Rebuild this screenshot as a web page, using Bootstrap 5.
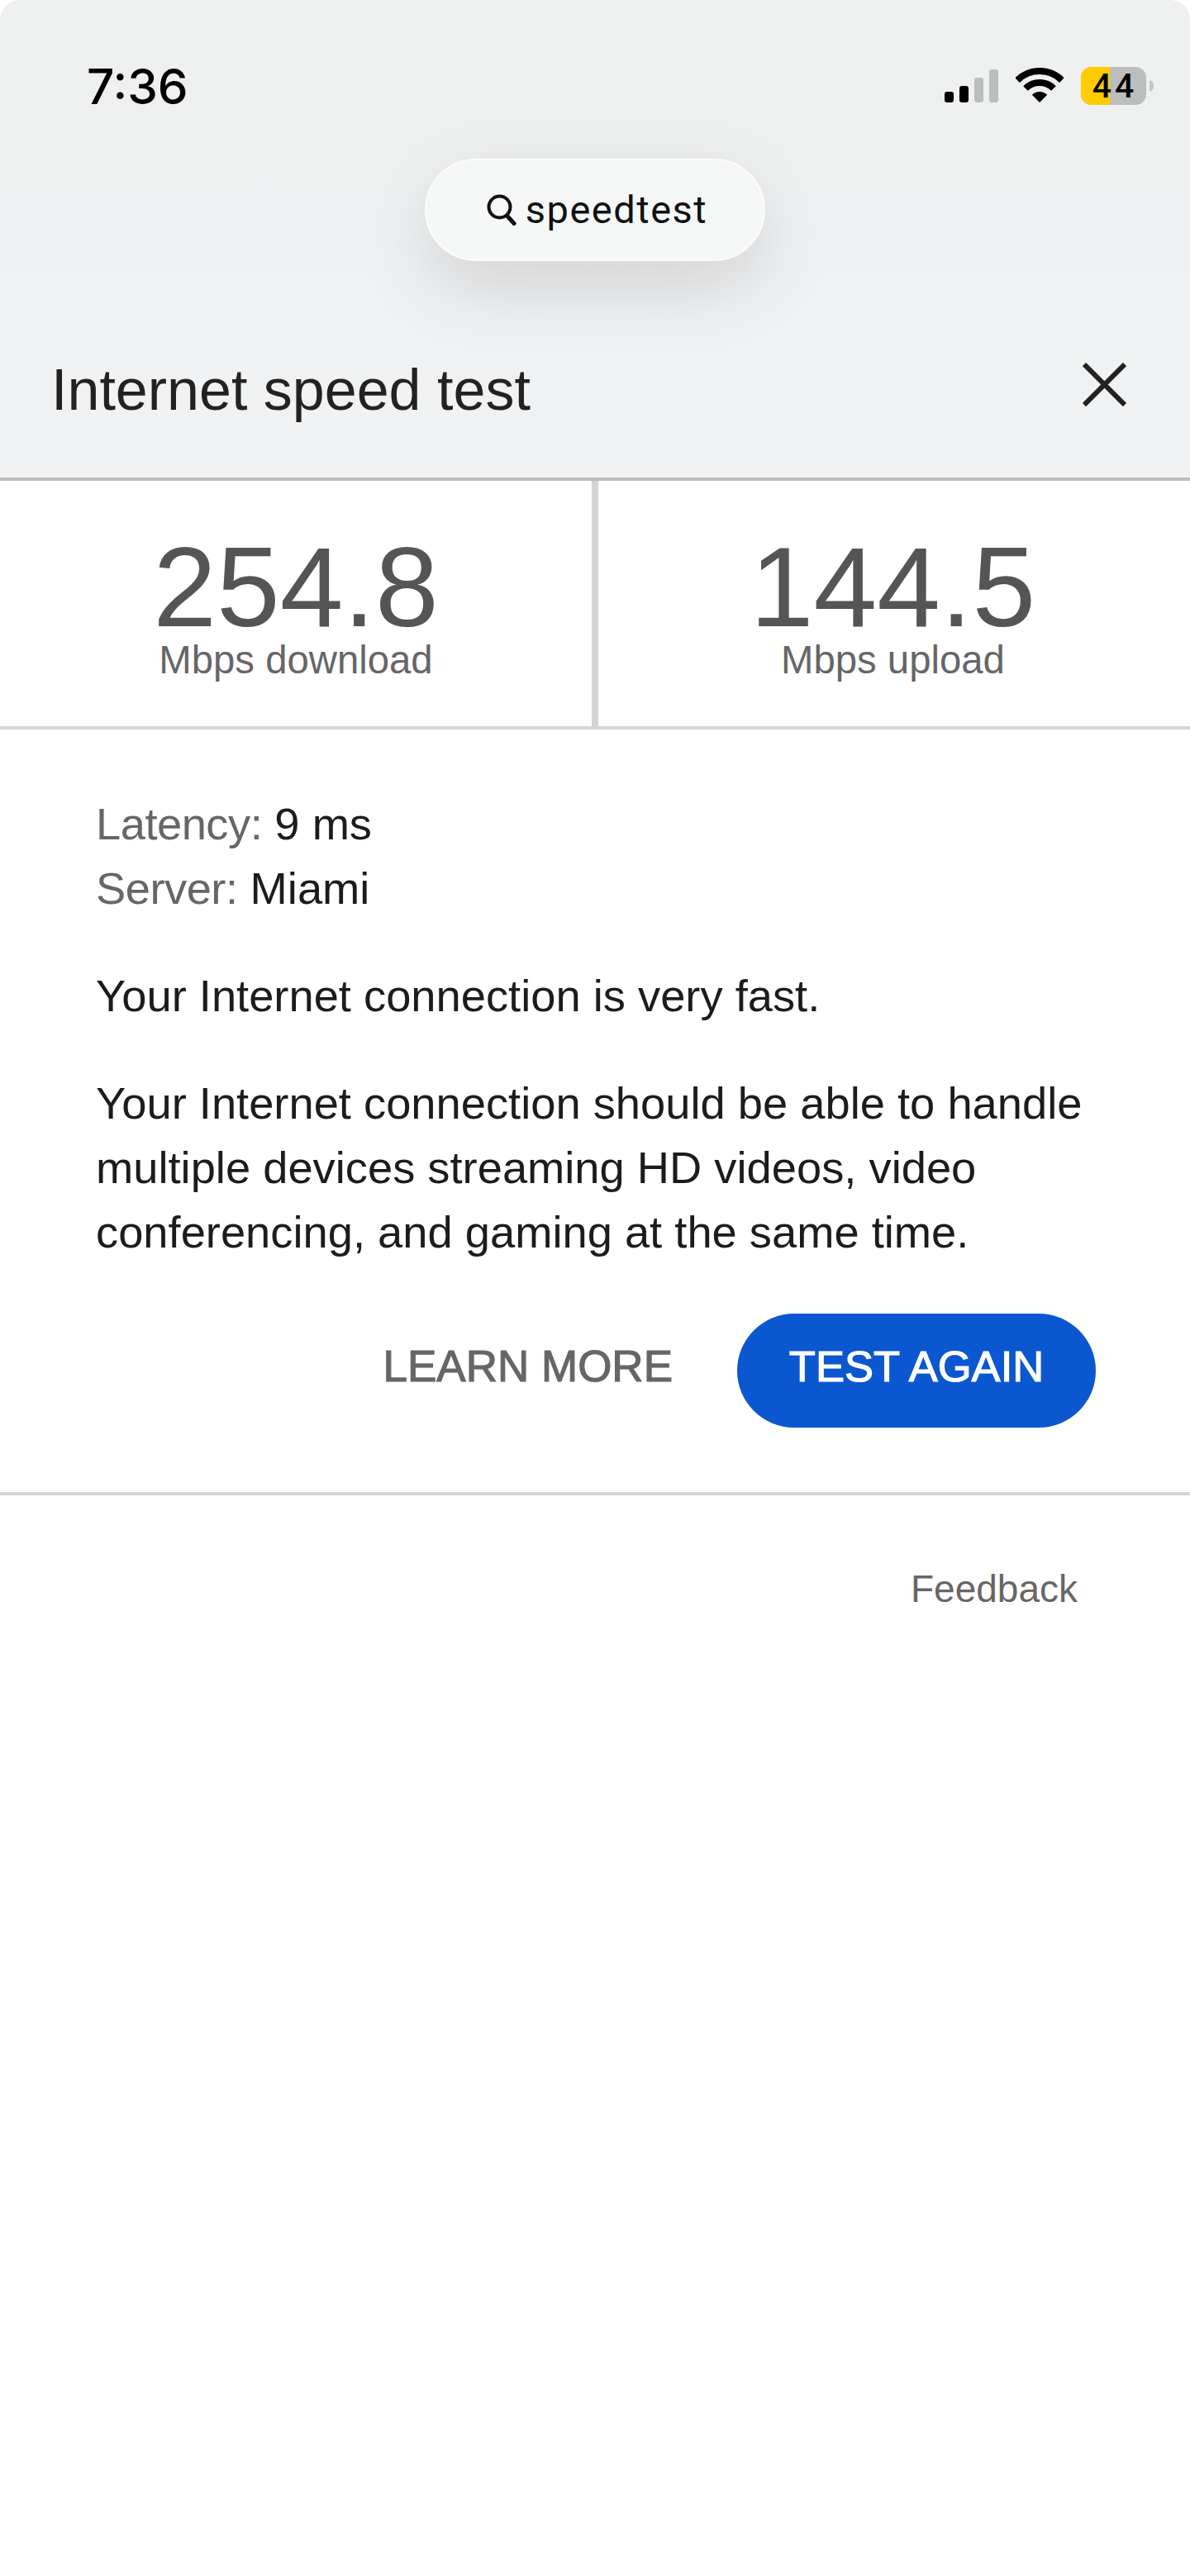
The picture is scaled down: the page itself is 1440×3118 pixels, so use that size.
<!DOCTYPE html>
<html lang="en">

<head>
    <meta charset="UTF-8" />
    <meta name="viewport" content="width=device-width, initial-scale=1.0" />
    <title>Internet speed test</title>
    <link href="https://cdn.jsdelivr.net/npm/bootstrap@5.3.0/dist/css/bootstrap.min.css" rel="stylesheet" />
    <style>
        body {
            background: #fff;
            font-family: "Liberation Sans", Arial, sans-serif;
            color: #1c1c1c;
        }

        .top-area {
            height: 578px;
            background: linear-gradient(#eeefef, #f1f2f4);
            border-radius: 24px 24px 0 0;
        }

        .status-row {
            height: 192px;
            padding: 78px 44px 0 105px;
        }

        .clock {
            font-family: Inter, sans-serif;
            font-weight: 500;
            font-size: 58.5px;
            line-height: 54px;
            color: #000;
        }

        .status-icons {
            height: 46px;
            margin-top: 3px;
        }

        .signal {
            width: 65px;
            height: 40px;
            margin-top: 3px;
            margin-right: 21px;
        }

        .wifi {
            width: 58px;
            height: 42px;
            margin-top: 1px;
            margin-right: 21px;
        }

        .battery {
            width: 88px;
            height: 46px;
        }

        .battery text {
            font-family: Roboto, sans-serif;
            font-weight: 500;
            font-size: 41px;
            letter-spacing: 4px;
        }

        .search-pill {
            width: 412px;
            height: 124px;
            margin: 0 auto;
            padding-left: 5px;
            gap: 11px;
            background: #f6f8f7;
            border: 2px solid #fbfcfb;
            border-radius: 62px;
            box-shadow: 0 30px 90px rgba(0, 0, 0, .13);
            font-family: Roboto, sans-serif;
            font-size: 47px;
            letter-spacing: 1.5px;
            color: #111;
        }

        .search-pill svg {
            width: 36px;
            height: 38px;
        }

        .title-row {
            padding: 116px 77px 0 62px;
        }

        .page-title {
            font-size: 70px;
            line-height: 80px;
            font-weight: 400;
            color: #222;
            margin: 0;
        }

        .close-x {
            width: 53px;
            height: 53px;
            margin-top: 7px;
        }

        .stats {
            height: 305px;
            border-top: 4px solid #bdbdbd;
            border-bottom: 4px solid #d6d6d6;
        }

        .stat-cell {
            padding-top: 73px;
        }

        .stat-cell:first-child {
            border-right: 4px solid #d4d4d4;
        }

        .stat-cell:last-child {
            border-left: 4px solid #d4d4d4;
            padding-right: 3px;
        }

        .stat-num {
            font-size: 138px;
            line-height: 110px;
            color: #555;
        }

        .stat-label {
            font-size: 47.3px;
            line-height: 56px;
            color: #666;
            margin-top: 6px;
        }

        .result-body {
            padding: 76px 116px 0;
            font-size: 54.3px;
            line-height: 78px;
        }

        .result-body p {
            margin: 0;
        }

        .result-body p.para-gap {
            margin-top: 52px;
        }

        .dim {
            color: #666;
            letter-spacing: -.5px;
        }

        .btn-learn,
        .btn-again {
            line-height: 60px;
            -webkit-text-stroke: 1.2px currentColor;
            padding: 0 0 10px;
            border: 0;
        }

        .btn-learn {
            font-size: 53px;
            color: #666;
            background: none;
            margin-right: 78px;
        }

        .btn-again {
            font-size: 52.5px;
            width: 434px;
            height: 138px;
            color: #fff;
            background: #0b57d0;
            border-radius: 69px;
        }

        .actions {
            padding-right: 114px;
            padding-top: 59px;
            padding-bottom: 78px;
            border-bottom: 4px solid #d4d4d4;
        }

        .feedback {
            font-size: 46px;
            line-height: 54px;
            color: #666;
            padding: 86px 136px 0 0;
        }
    </style>
</head>

<body>
    <div class="top-area">
        <div class="status-row d-flex justify-content-between align-items-start">
            <div class="clock">7:36</div>
            <div class="status-icons d-flex align-items-start">
                <svg class="signal" viewBox="0 0 65 40">
                    <rect x="0" y="27" width="11" height="13" rx="3" fill="#000" />
                    <rect x="18" y="20" width="11" height="20" rx="3" fill="#000" />
                    <rect x="36" y="10" width="11" height="30" rx="3" fill="#bcbebd" />
                    <rect x="54" y="0" width="11" height="40" rx="3" fill="#bcbebd" />
                </svg>
                <svg class="wifi" viewBox="0 0 58 42">
                    <path d="M2.1 15.1a38 38 0 0 1 53.8 0M12 25a24 24 0 0 1 34 0" fill="none" stroke="#000" stroke-width="8" />
                    <path d="M29 42 19.8 32.8a13 13 0 0 1 18.4 0z" fill="#000" />
                </svg>
                <svg class="battery" viewBox="0 0 88 46">
                    <rect x="0" y="0" width="79" height="46" rx="13" fill="#bcbebd" />
                    <path d="M13 0h22v46H13a13 13 0 0 1-13-13V13A13 13 0 0 1 13 0z" fill="#ffcc00" />
                    <path d="M83 16c3 1 5 3 5 7s-2 6-5 7z" fill="#c4c6c5" />
                    <text x="41" y="37" text-anchor="middle" fill="#000">44</text>
                </svg>
            </div>
        </div>

        <div class="search-pill d-flex align-items-center justify-content-center">
            <svg viewBox="0 0 36 38">
                <circle cx="15.5" cy="15.5" r="13" fill="none" stroke="#111" stroke-width="4" />
                <path d="M24.5 26 33 35.5" fill="none" stroke="#111" stroke-width="5" stroke-linecap="round" />
            </svg>
            <span>speedtest</span>
        </div>

        <div class="title-row d-flex justify-content-between align-items-start">
            <h1 class="page-title">Internet speed test</h1>
            <svg class="close-x" viewBox="0 0 53 53">
                <path d="M2 2 51 51M51 2 2 51" fill="none" stroke="#222" stroke-width="6" />
            </svg>
        </div>
    </div>

    <div class="stats row g-0 text-center">
        <div class="stat-cell col-6">
            <div class="stat-num">254.8</div>
            <div class="stat-label">Mbps download</div>
        </div>
        <div class="stat-cell col-6">
            <div class="stat-num">144.5</div>
            <div class="stat-label">Mbps upload</div>
        </div>
    </div>

    <div class="result-body">
        <p><span class="dim">Latency:</span> 9 ms</p>
        <p><span class="dim">Server:</span> Miami</p>
        <p class="para-gap">Your Internet connection is very fast.</p>
        <p class="para-gap">Your Internet connection should be able to handle multiple devices streaming HD videos, video conferencing, and gaming at the same time.</p>
    </div>

    <div class="actions d-flex justify-content-end align-items-center">
        <button class="btn btn-learn" type="button">LEARN MORE</button>
        <button class="btn btn-again" type="button">TEST AGAIN</button>
    </div>

    <div class="feedback text-end">Feedback</div>
</body>

</html>
